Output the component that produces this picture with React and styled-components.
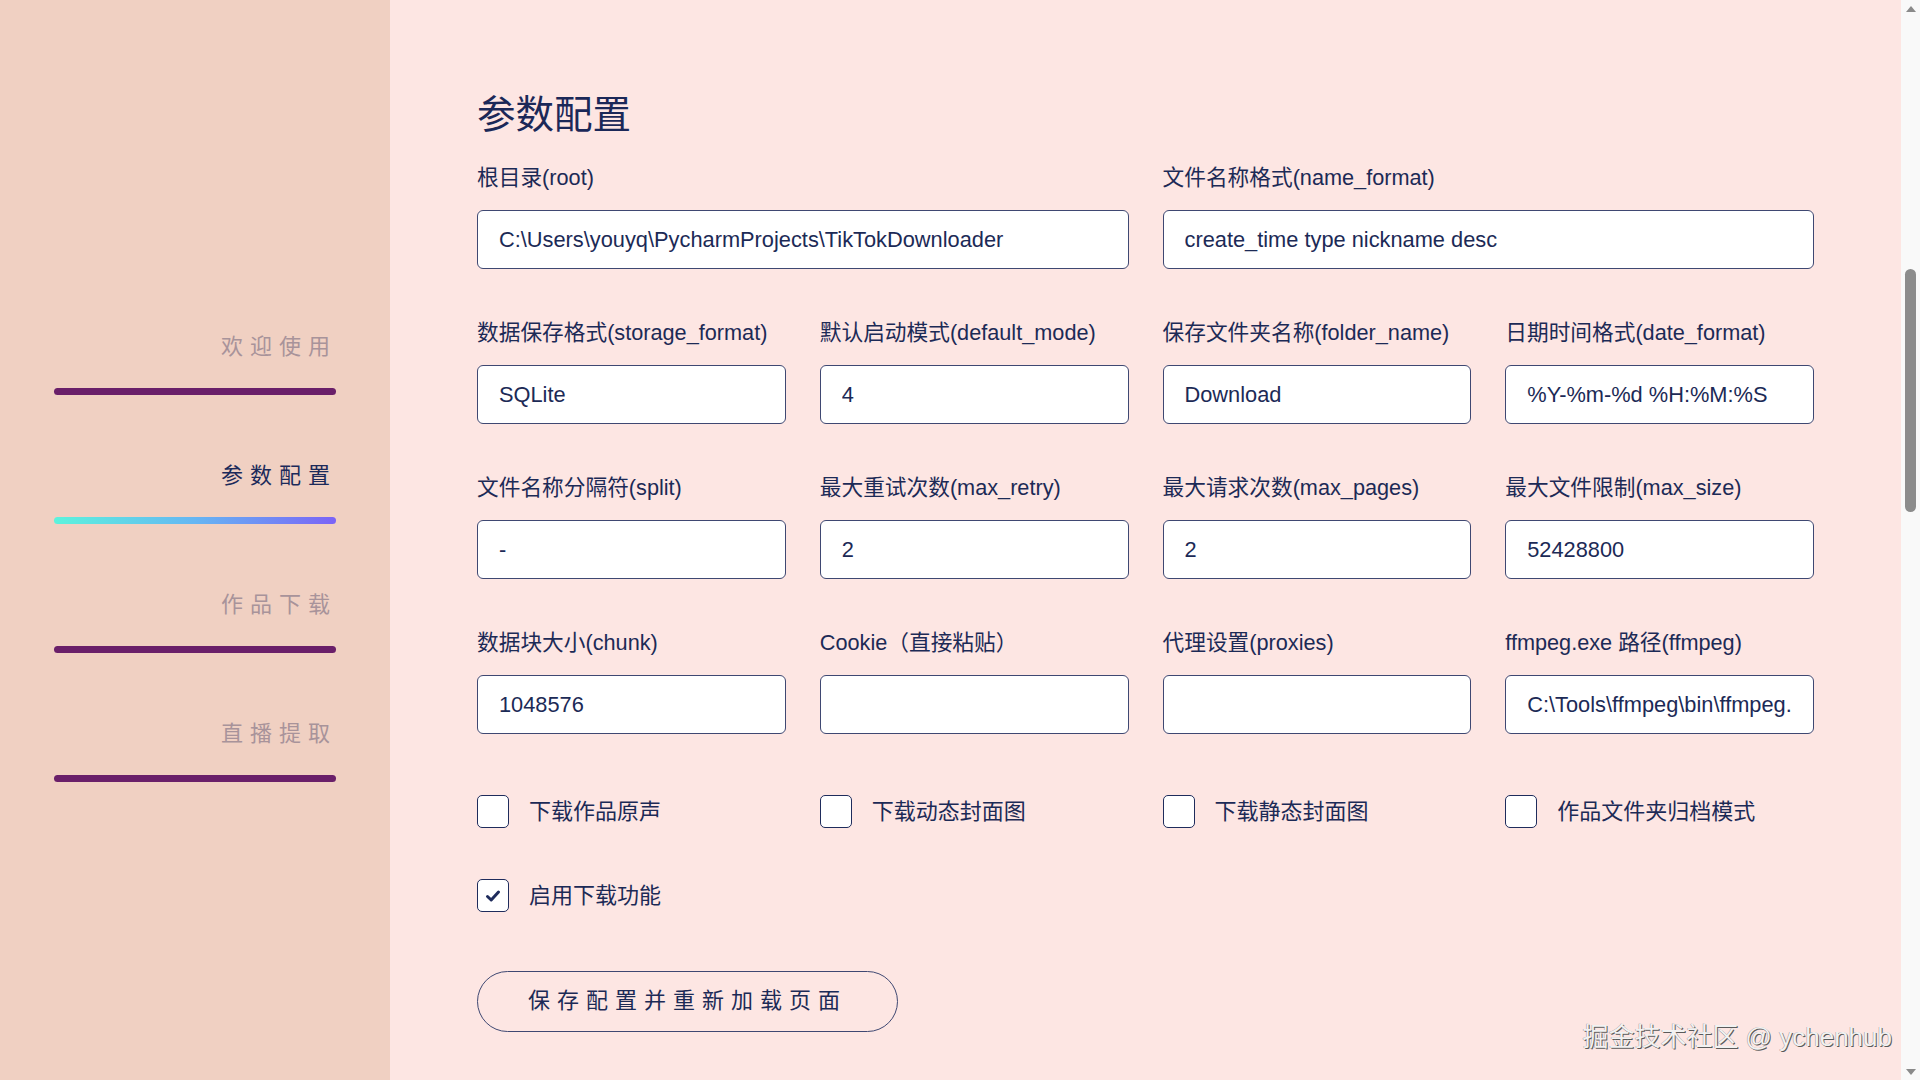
import React from "react";
import styled, { createGlobalStyle } from "styled-components";

const Global = createGlobalStyle`
  html, body { margin: 0; padding: 0; height: 100%; overflow: hidden; }
  body {
    font-family: "Liberation Sans", "Noto Sans CJK SC", sans-serif;
    color: #1c2a56;
    background: #fde6e3;
  }
  *, *::before, *::after { box-sizing: border-box; }
`;

const Page = styled.div`
  display: flex;
  width: 100vw;
  height: 100vh;
  background: #fde6e3;
`;

const Sidebar = styled.nav`
  width: 390px;
  flex-shrink: 0;
  background: #f0d0c2;
  padding: 332px 54px 0;
  display: flex;
  flex-direction: column;
  gap: 66px;
`;

const NavItem = styled.div`
  display: flex;
  flex-direction: column;
  gap: 26px;
  cursor: pointer;
`;

const NavText = styled.div`
  text-align: right;
  font-size: 22px;
  line-height: 30px;
  letter-spacing: 7px;
  margin-right: -1px;
  color: ${(p) => (p.$active ? "#1c2a5a" : "#a8939a")};
`;

const NavBar = styled.div`
  height: 7px;
  border-radius: 4px;
  background: ${(p) =>
    p.$active ? "linear-gradient(90deg, #5cf3dc 0%, #66b6f3 50%, #7b63f6 100%)" : "#6a1f69"};
`;

const Main = styled.main`
  flex: 1;
  min-width: 0;
  position: relative;
  padding: 91px 87px 0;
`;

const Title = styled.h1`
  margin: 0;
  font-size: 38.5px;
  line-height: 48px;
  font-weight: 400;
  color: #1b2858;
`;

const FieldGrid = styled.div`
  margin-top: 25px;
  display: grid;
  grid-template-columns: repeat(4, 1fr);
  column-gap: 34px;
  row-gap: 50px;
`;

const Field = styled.label`
  display: flex;
  flex-direction: column;
  gap: 19px;
  min-width: 0;
  grid-column: span ${(p) => p.$span || 1};
`;

const Label = styled.span`
  font-size: 21.7px;
  line-height: 27px;
  color: #1c2a56;
  white-space: nowrap;
`;

const Input = styled.input`
  width: 100%;
  height: 59px;
  border: 1px solid #3f4872;
  border-radius: 6px;
  background: #ffffff;
  padding: 0 21px;
  font: 21.8px "Liberation Sans", "Noto Sans CJK SC", sans-serif;
  color: #1c2a56;
  outline: none;
`;

const CheckGrid = styled.div`
  margin-top: 61px;
  display: grid;
  grid-template-columns: repeat(4, 1fr);
  column-gap: 34px;
  row-gap: 51px;
`;

const CheckItem = styled.label`
  display: flex;
  align-items: center;
  gap: 20px;
  cursor: pointer;
`;

const CheckBox = styled.span`
  width: 32px;
  height: 33px;
  flex-shrink: 0;
  border: 1.5px solid #1f2c5c;
  border-radius: 5px;
  background: #ffffff;
  display: flex;
  align-items: center;
  justify-content: center;
`;

const CheckText = styled.span`
  font-size: 22px;
  line-height: 33px;
  color: #1c2a56;
`;

const SaveButton = styled.button`
  margin-top: 59px;
  height: 61px;
  padding: 0 50px 2px;
  border: 1px solid #3f4872;
  border-radius: 31px;
  background: transparent;
  font: 22px/26px "Liberation Sans", "Noto Sans CJK SC", sans-serif;
  letter-spacing: 7px;
  color: #1c2a56;
  cursor: pointer;
`;

const Watermark = styled.div`
  position: absolute;
  right: 9px;
  bottom: 27px;
  font-size: 26px;
  line-height: 32px;
  color: #f2f2f2;
  text-shadow: 1px 1px 0 #5a5a5a, -0.5px -0.5px 0 #9a9a9a;
  pointer-events: none;
`;

const ScrollTrack = styled.div`
  width: 19px;
  flex-shrink: 0;
  background: #f9f9f9;
  display: flex;
  flex-direction: column;
  align-items: center;
  padding: 6px 0 5px;
`;

const Arrow = styled.span`
  width: 0;
  height: 0;
  border-left: 5px solid transparent;
  border-right: 5px solid transparent;
  ${(p) =>
    p.$down
      ? "border-top: 6px solid #8a8a8a;"
      : "border-bottom: 6px solid #8a8a8a;"}
`;

const Thumb = styled.div`
  margin-top: 257px;
  width: 11px;
  height: 243px;
  border-radius: 6px;
  background: #8c8c8c;
`;

const Spacer = styled.div`
  flex: 1;
`;

const nav = [
  { text: "欢迎使用" },
  { text: "参数配置", active: true },
  { text: "作品下载" },
  { text: "直播提取" },
];

const fields = [
  { label: "根目录(root)", value: "C:\\Users\\youyq\\PycharmProjects\\TikTokDownloader", span: 2 },
  { label: "文件名称格式(name_format)", value: "create_time type nickname desc", span: 2 },
  { label: "数据保存格式(storage_format)", value: "SQLite" },
  { label: "默认启动模式(default_mode)", value: "4" },
  { label: "保存文件夹名称(folder_name)", value: "Download" },
  { label: "日期时间格式(date_format)", value: "%Y-%m-%d %H:%M:%S" },
  { label: "文件名称分隔符(split)", value: "-" },
  { label: "最大重试次数(max_retry)", value: "2" },
  { label: "最大请求次数(max_pages)", value: "2" },
  { label: "最大文件限制(max_size)", value: "52428800" },
  { label: "数据块大小(chunk)", value: "1048576" },
  { label: "Cookie（直接粘贴）", value: "" },
  { label: "代理设置(proxies)", value: "" },
  { label: "ffmpeg.exe 路径(ffmpeg)", value: "C:\\Tools\\ffmpeg\\bin\\ffmpeg.exe" },
];

const checks = [
  { label: "下载作品原声", checked: false },
  { label: "下载动态封面图", checked: false },
  { label: "下载静态封面图", checked: false },
  { label: "作品文件夹归档模式", checked: false },
  { label: "启用下载功能", checked: true },
];

const CheckIcon = () => (
  <svg width="18" height="18" viewBox="0 0 18 18">
    <polyline
      points="3.5,9.5 7.2,13 14.5,5"
      fill="none"
      stroke="#1f2c5c"
      strokeWidth="3"
      strokeLinecap="round"
      strokeLinejoin="round"
    />
  </svg>
);

export default function App() {
  return (
    <>
      <Global />
      <Page>
        <Sidebar>
          {nav.map((n) => (
            <NavItem key={n.text}>
              <NavText $active={n.active}>{n.text}</NavText>
              <NavBar $active={n.active} />
            </NavItem>
          ))}
        </Sidebar>
        <Main>
          <Title>参数配置</Title>
          <FieldGrid>
            {fields.map((f) => (
              <Field key={f.label} $span={f.span}>
                <Label>{f.label}</Label>
                <Input type="text" defaultValue={f.value} />
              </Field>
            ))}
          </FieldGrid>
          <CheckGrid>
            {checks.map((c) => (
              <CheckItem key={c.label}>
                <CheckBox>{c.checked && <CheckIcon />}</CheckBox>
                <CheckText>{c.label}</CheckText>
              </CheckItem>
            ))}
          </CheckGrid>
          <SaveButton type="button">保存配置并重新加载页面</SaveButton>
          <Watermark>掘金技术社区 @ ychenhub</Watermark>
        </Main>
        <ScrollTrack>
          <Arrow />
          <Thumb />
          <Spacer />
          <Arrow $down />
        </ScrollTrack>
      </Page>
    </>
  );
}
